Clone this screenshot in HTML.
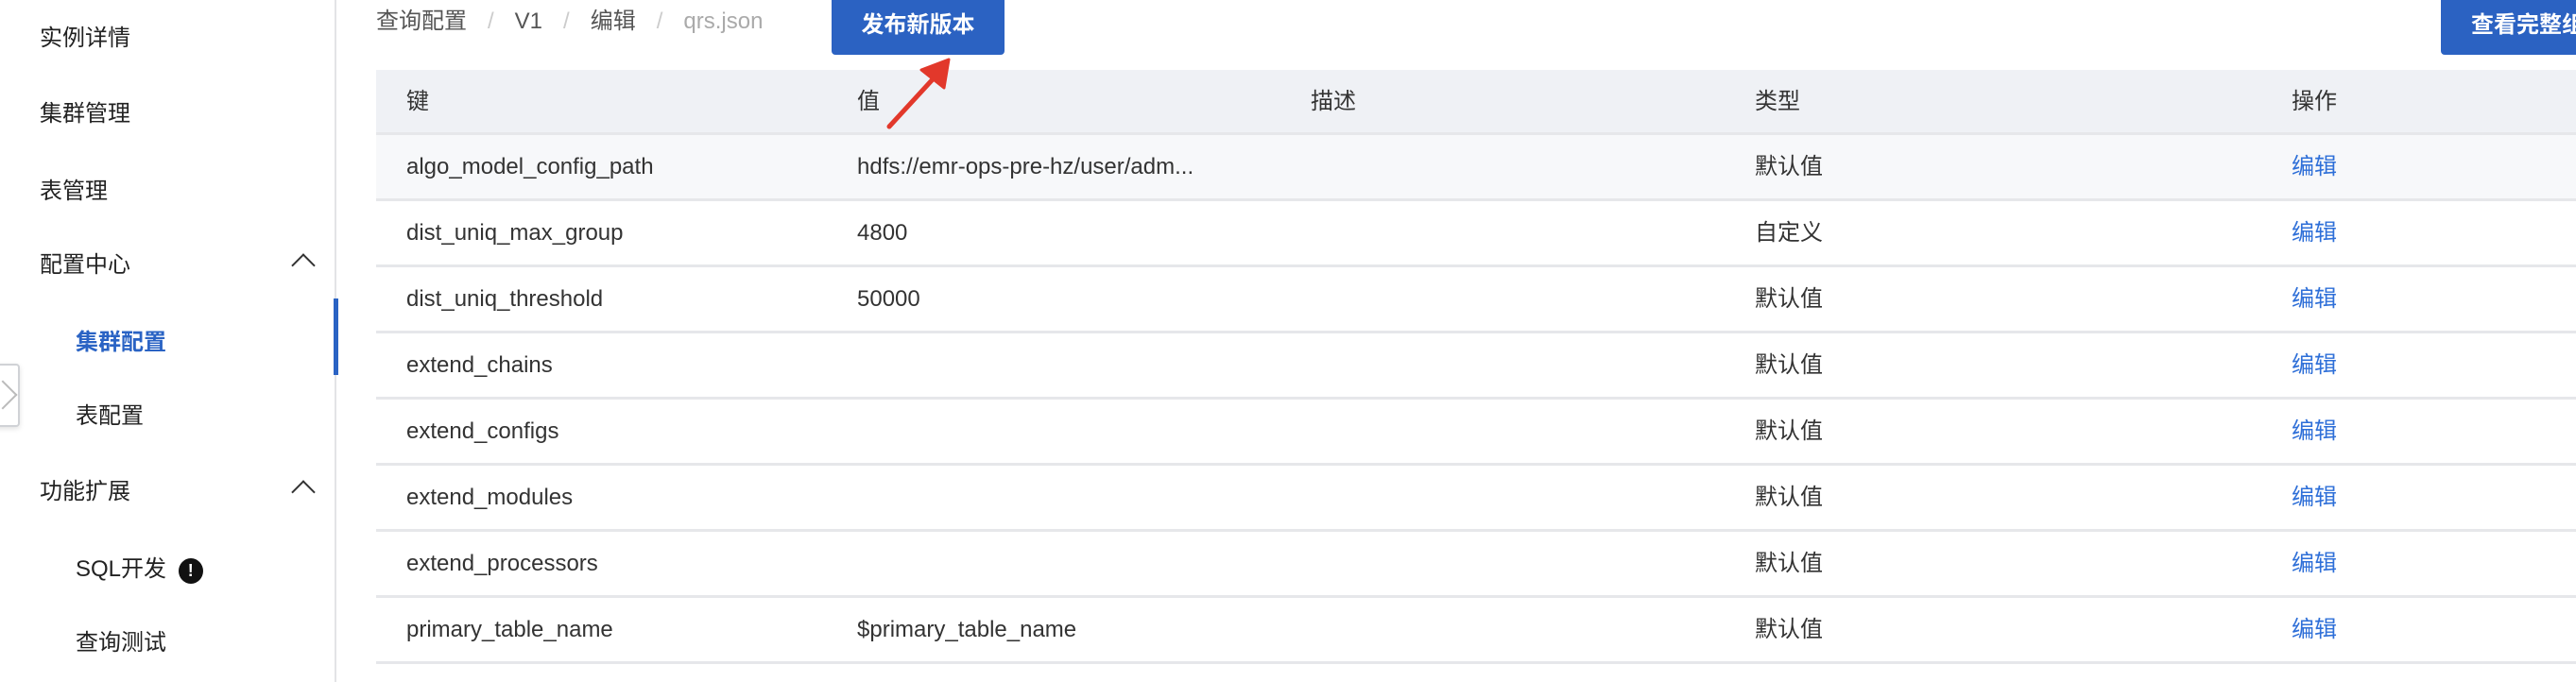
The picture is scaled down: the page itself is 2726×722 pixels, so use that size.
<!DOCTYPE html>
<html><head><meta charset="utf-8"><style>
*{margin:0;padding:0;box-sizing:border-box}
body{width:2726px;height:722px;overflow:hidden;background:#fff;font-family:"Liberation Sans","Noto Sans CJK SC",sans-serif;color:#333;position:relative}
.side{position:absolute;left:0;top:0;width:356px;height:722px;border-right:2px solid #e3e4e6}
.it{position:absolute;font-size:24px;line-height:30px;color:#222}
.sub{left:80px}
.top{left:42px}
.act{color:#2a63c4;font-weight:bold}
.chev{position:absolute;left:312px;width:18px;height:18px;border-left:2.5px solid #333;border-top:2.5px solid #333;transform:rotate(45deg)}
.bar{position:absolute;left:353px;top:316px;width:5px;height:81px;background:#2a63c4}
.tab{position:absolute;left:-6px;top:385px;width:27px;height:67px;border:2px solid #d0d2d6;border-radius:4px;background:#fff;box-shadow:0 2px 6px rgba(0,0,0,.12)}
.tab:after{content:"";position:absolute;left:-4px;top:20px;width:20px;height:20px;border-right:2px solid #bbb;border-top:2px solid #bbb;transform:rotate(45deg)}
.bc{position:absolute;left:398px;top:8px;font-size:24px;line-height:30px;color:#555;white-space:nowrap}
.bc .s{color:#ccc;margin:0 22px}
.bc .l{color:#aaa}
.btn{position:absolute;top:0;height:58px;background:#2b62c2;color:#fff;font-size:24px;font-weight:bold;line-height:54px;text-align:center;border-radius:0 0 4px 4px}
.tbl{position:absolute;left:398px;top:74px;width:2328px}
.row{position:relative;height:70px;border-bottom:3px solid #e6e7ea}
.hd{background:#eff1f5;height:69px}
.hover{background:#f7f8fa}
.c{position:absolute;top:0;line-height:67px;font-size:24px;color:#333;white-space:nowrap}
.k{left:32px}.v{left:509px}.d{left:989px}.t{left:1459px}.o{left:2027px}
.e{color:#2e6fd8}
</style></head><body>
<div class="side">
<div class="it top" style="top:26px">实例详情</div>
<div class="it top" style="top:106px">集群管理</div>
<div class="it top" style="top:188px">表管理</div>
<div class="it top" style="top:266px">配置中心</div><div class="chev" style="top:272px"></div>
<div class="it sub act" style="top:348px">集群配置</div>
<div class="it sub" style="top:426px">表配置</div>
<div class="it top" style="top:506px">功能扩展</div><div class="chev" style="top:512px"></div>
<div class="it sub" style="top:588px">SQL开发 <span style="display:inline-block;width:26px;height:27px;border-radius:50%;background:#111;color:#fff;font-size:18px;line-height:27px;text-align:center;font-weight:bold;vertical-align:0px;margin-left:6px">!</span></div>
<div class="it sub" style="top:666px">查询测试</div>
<div class="bar"></div>
</div>
<div class="tab"></div>
<div class="bc">查询配置<span class="s">/</span>V1<span class="s">/</span>编辑<span class="s">/</span><span class="l">qrs.json</span></div>
<div class="btn" style="left:880px;width:183px">发布新版本</div>
<div class="btn" style="left:2583px;width:160px;text-align:left;padding-left:32px">查看完整组</div>
<div class="tbl">
<div class="row hd"><div class="c k">键</div><div class="c v">值</div><div class="c d">描述</div><div class="c t">类型</div><div class="c o">操作</div></div>
<div class="row hover"><div class="c k">algo_model_config_path</div><div class="c v">hdfs://emr-ops-pre-hz/user/adm...</div><div class="c t">默认值</div><div class="c o e">编辑</div></div>
<div class="row"><div class="c k">dist_uniq_max_group</div><div class="c v">4800</div><div class="c t">自定义</div><div class="c o e">编辑</div></div>
<div class="row"><div class="c k">dist_uniq_threshold</div><div class="c v">50000</div><div class="c t">默认值</div><div class="c o e">编辑</div></div>
<div class="row"><div class="c k">extend_chains</div><div class="c t">默认值</div><div class="c o e">编辑</div></div>
<div class="row"><div class="c k">extend_configs</div><div class="c t">默认值</div><div class="c o e">编辑</div></div>
<div class="row"><div class="c k">extend_modules</div><div class="c t">默认值</div><div class="c o e">编辑</div></div>
<div class="row"><div class="c k">extend_processors</div><div class="c t">默认值</div><div class="c o e">编辑</div></div>
<div class="row"><div class="c k">primary_table_name</div><div class="c v">$primary_table_name</div><div class="c t">默认值</div><div class="c o e">编辑</div></div>
</div>
<svg style="position:absolute;left:0;top:0" width="2726" height="722">
<line x1="941" y1="134" x2="998" y2="72" stroke="#e2382b" stroke-width="5" stroke-linecap="round"/>
<path d="M1004 63 L975 74 L999 93 Z" fill="#e2382b" stroke="#e2382b" stroke-width="3" stroke-linejoin="round"/>
</svg>
</body></html>
